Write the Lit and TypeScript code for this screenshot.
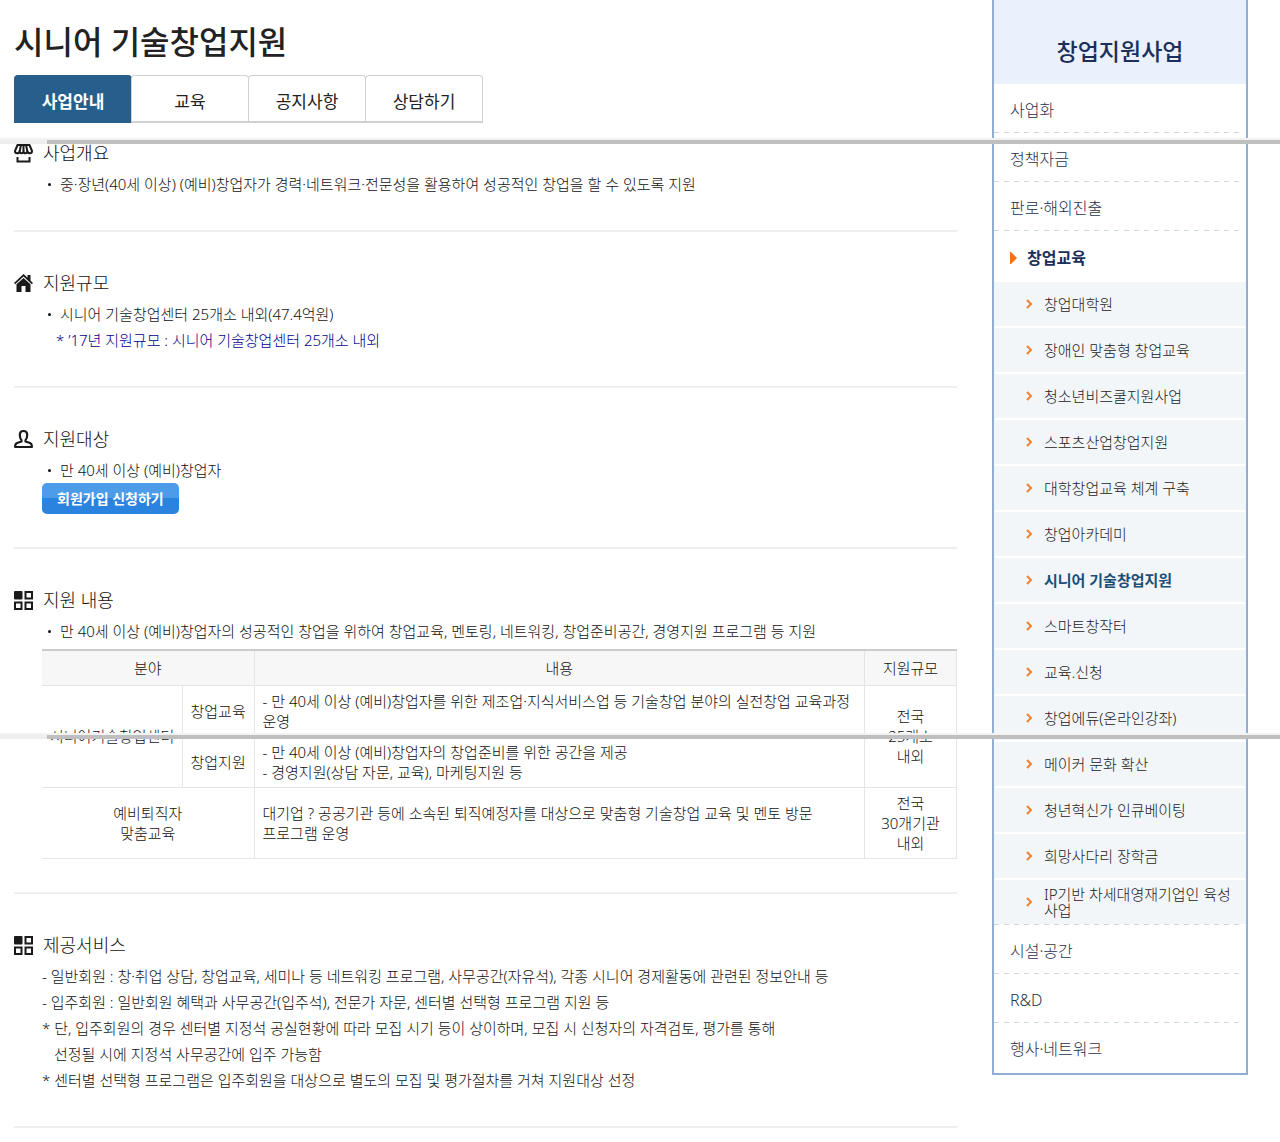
import { LitElement, html, css, svg } from "lit";
import { customElement } from "lit/decorators.js";

const TABS = ["사업안내", "교육", "공지사항", "상담하기"];

const SUB_MENU = [
  "창업대학원",
  "장애인 맞춤형 창업교육",
  "청소년비즈쿨지원사업",
  "스포츠산업창업지원",
  "대학창업교육 체계 구축",
  "창업아카데미",
  "시니어 기술창업지원",
  "스마트창작터",
  "교육.신청",
  "창업에듀(온라인강좌)",
  "메이커 문화 확산",
  "청년혁신가 인큐베이팅",
  "희망사다리 장학금",
  "IP기반 차세대영재기업인 육성사업",
];

const ICONS = {
  shop: svg`
    <g fill="none" stroke="currentColor" stroke-width="2" stroke-linejoin="round">
      <path d="M3.500 2h12L18 8c0 3-4.200 3-4.700 0 0 3-3.800 3-3.800 0 0 3-3.800 3-3.800 0C5.200 11 1 11 1 8z"/>
      <path d="M5.700 8 7 2M9.500 8V2M13.300 8 12 2"/>
      <path d="M3.500 14v4.500h12V14" stroke-linejoin="miter"/>
    </g>`,
  home: svg`
    <path d="M0 10 9.500 1l4 3.700V2h3v5.500L19 10l-1.200 1.300-8.300-7.700-8.300 7.700z"/>
    <path d="M2.500 11.300 9.500 5l7 6.300V19h-5v-6h-4v6h-5z"/>`,
  user: svg`
    <path fill="none" stroke="currentColor" stroke-width="2.200" stroke-linejoin="round" d="M9.500 2C6.800 2 5.800 3.800 5.800 6c0 2.500.8 4.200 1.700 5.200v1.300L3 14c-1.300.5-1.900 1.500-1.900 4h16.800c0-2.500-.6-3.500-1.900-4l-4.500-1.500v-1.300c.9-1 1.700-2.700 1.700-5.200 0-2.200-1-4-3.700-4z"/>`,
  grid: svg`
    <rect x="0" y="1" width="8.500" height="8.500" rx="1"/>
    <g fill="none" stroke="currentColor" stroke-width="2">
      <rect x="11.500" y="2" width="6.500" height="6.500"/>
      <rect x="1" y="12.500" width="6.500" height="6.500"/>
      <rect x="11.500" y="12.500" width="6.500" height="6.500"/>
    </g>`,
};

@customElement("app-root")
export class AppRoot extends LitElement {
  static styles = css`
    :host {
      display: block;
      position: relative;
      overflow: hidden;
      background: #fff;
      color: #111;
      font: 300 15px/20px "Noto Sans", "Noto Sans CJK KR", sans-serif;
    }
    * { box-sizing: border-box; }
    h1, h2, p, ul { margin: 0; padding: 0; }
    ul { list-style: none; }
    a { color: inherit; text-decoration: none; }

    .page { display: flex; align-items: flex-start; gap: 35px; padding: 0 32px 0 14px; }
    .main { flex: 1; min-width: 0; }
    .title { padding-top: 20px; font-size: 32px; line-height: 44px; font-weight: 500; color: #222; }

    .tabs { display: flex; margin-top: 11px; }
    .tab {
      width: 118px; height: 48px; margin-right: -1px; padding: 6px 0 0;
      border: 1px solid #d0d0d0; border-bottom-width: 2px; border-radius: 4px 4px 0 0; background: #fff;
      color: #222; font: inherit; font-size: 17px; font-weight: 400;
    }
    .tab.on { border-color: #265f8c; background: #265f8c; color: #fff; font-weight: 700; }

    .section { border-bottom: 2px solid #eee; padding: 39px 0 33px; }
    .section.first { padding-top: 18px; }
    .head { display: flex; align-items: center; gap: 9px; height: 24px; font-size: 18px; font-weight: 300; line-height: 24px; }
    .icon { width: 20px; height: 20px; fill: #1a1a1a; color: #1a1a1a; }
    .body { padding: 6px 0 0 28px; line-height: 26px; }
    .bullets li { position: relative; padding-left: 18px; }
    .bullets li::before {
      content: ""; position: absolute; left: 6px; top: 12px;
      width: 3px; height: 3px; border-radius: 50%; background: #111;
    }
    .note { padding-left: 14px; color: #00008c; }
    .indent { padding-left: 12px; }
    .join {
      display: block; height: 31px; padding: 0 15px; border: 0; border-radius: 5px;
      background: linear-gradient(#4c9cea 0 48%, #2b83e0 48%); color: #fff;
      font: inherit; font-size: 14px; font-weight: 700;
    }

    .table { width: 100%; margin-top: 5px; border-collapse: collapse; table-layout: fixed; line-height: 20px; }
    .table th { height: 35px; background: #f7f7f7; border-top: 2px solid #ccc; font-weight: 300; }
    .table th, .table td {
      padding: 5px 8px; border-bottom: 1px solid #e5e5e5; border-right: 1px solid #e5e5e5;
      text-align: center; white-space: nowrap;
    }
    .table td.text { text-align: left; white-space: normal; }
    .c1 { width: 140px; }
    .c2 { width: 72px; }
    .c4 { width: 92px; }

    .side { width: 256px; padding-bottom: 2px; border: 2px solid #92add2; border-top: 0; color: #222; }
    .side-title {
      display: flex; align-items: center; justify-content: center; height: 84px; padding-top: 18px;
      background: #eaf1fc; color: #1c2f5a; font-size: 23px; line-height: 32px; font-weight: 500;
    }
    .item { display: flex; align-items: center; height: 48px; padding: 4px 16px 0; font-size: 16px; color: #1f2f4a; }
    .rule { height: 1px; padding-right: 6px; background: repeating-linear-gradient(90deg, #ccd9e0 0 5px, #fff 5px 10px) content-box; }
    .item.open { gap: 9px; height: 51px; padding-top: 2px; color: #1c2f5a; font-weight: 700; }
    .tri { width: 8px; height: 12px; fill: #f47216; }
    .subs { display: grid; gap: 2px; }
    .sub { display: flex; align-items: center; gap: 11px; height: 44px; padding: 0 12px 0 32px; background: #f2f6f9; line-height: 16px; }
    .sub.on { color: #1a5078; font-weight: 700; }
    .chev { flex: none; width: 7px; height: 10px; fill: none; stroke: #f08030; stroke-width: 2; }

    .seam {
      position: absolute; left: 0; right: 0; height: 6px;
      background: linear-gradient(#f2f2f2 2px, transparent 2px), linear-gradient(90deg, #eee 47px, #bfbfbf 47px);
    }
    .seam.a { top: 138px; }
    .seam.b { top: 733px; }
  `;

  head(icon: keyof typeof ICONS, text: string) {
    return html`<h2 class="head"><svg class="icon" viewBox="0 0 20 20" aria-hidden="true">${ICONS[icon]}</svg>${text}</h2>`;
  }

  item(text: string) {
    return html`<li><a class="item" href="#">${text}</a></li>`;
  }

  render() {
    const rule = html`<li class="rule" role="presentation"></li>`;
    return html`
      <div class="page">
        <main class="main">
          <h1 class="title">시니어 기술창업지원</h1>
          <nav class="tabs">
            ${TABS.map((t, i) => html`<button class="tab ${i === 0 ? "on" : ""}">${t}</button>`)}
          </nav>
          <section class="section first">
            ${this.head("shop", "사업개요")}
            <ul class="body bullets">
              <li>중·장년(40세 이상) (예비)창업자가 경력·네트워크·전문성을 활용하여 성공적인 창업을 할 수 있도록 지원</li>
            </ul>
          </section>
          <section class="section">
            ${this.head("home", "지원규모")}
            <div class="body">
              <ul class="bullets"><li>시니어 기술창업센터 25개소 내외(47.4억원)</li></ul>
              <p class="note">* ’17년 지원규모 : 시니어 기술창업센터 25개소 내외</p>
            </div>
          </section>
          <section class="section">
            ${this.head("user", "지원대상")}
            <div class="body">
              <ul class="bullets"><li>만 40세 이상 (예비)창업자</li></ul>
              <button class="join">회원가입 신청하기</button>
            </div>
          </section>
          <section class="section">
            ${this.head("grid", "지원 내용")}
            <div class="body">
              <ul class="bullets">
                <li>만 40세 이상 (예비)창업자의 성공적인 창업을 위하여 창업교육, 멘토링, 네트워킹, 창업준비공간, 경영지원 프로그램 등 지원</li>
              </ul>
              <table class="table">
                <colgroup><col class="c1" /><col class="c2" /><col /><col class="c4" /></colgroup>
                <thead>
                  <tr><th colspan="2">분야</th><th>내용</th><th>지원규모</th></tr>
                </thead>
                <tbody>
                  <tr>
                    <td rowspan="2">시니어기술창업센터</td>
                    <td>창업교육</td>
                    <td class="text">- 만 40세 이상 (예비)창업자를 위한 제조업·지식서비스업 등 기술창업 분야의 실전창업 교육과정 운영</td>
                    <td rowspan="2">전국<br />25개소<br />내외</td>
                  </tr>
                  <tr>
                    <td>창업지원</td>
                    <td class="text">- 만 40세 이상 (예비)창업자의 창업준비를 위한 공간을 제공<br />- 경영지원(상담 자문, 교육), 마케팅지원 등</td>
                  </tr>
                  <tr>
                    <td colspan="2">예비퇴직자<br />맞춤교육</td>
                    <td class="text">대기업 ? 공공기관 등에 소속된 퇴직예정자를 대상으로 맞춤형 기술창업 교육 및 멘토 방문<br />프로그램 운영</td>
                    <td>전국<br />30개기관<br />내외</td>
                  </tr>
                </tbody>
              </table>
            </div>
          </section>
          <section class="section">
            ${this.head("grid", "제공서비스")}
            <div class="body">
              <p>- 일반회원 : 창·취업 상담, 창업교육, 세미나 등 네트워킹 프로그램, 사무공간(자유석), 각종 시니어 경제활동에 관련된 정보안내 등</p>
              <p>- 입주회원 : 일반회원 혜택과 사무공간(입주석), 전문가 자문, 센터별 선택형 프로그램 지원 등</p>
              <p>* 단, 입주회원의 경우 센터별 지정석 공실현황에 따라 모집 시기 등이 상이하며, 모집 시 신청자의 자격검토, 평가를 통해</p>
              <p class="indent">선정될 시에 지정석 사무공간에 입주 가능함</p>
              <p>* 센터별 선택형 프로그램은 입주회원을 대상으로 별도의 모집 및 평가절차를 거쳐 지원대상 선정</p>
            </div>
          </section>
        </main>
        <aside class="side">
          <h2 class="side-title">창업지원사업</h2>
          <ul>
            ${this.item("사업화")}${rule}${this.item("정책자금")}${rule}${this.item("판로·해외진출")}${rule}
            <li>
              <a class="item open" href="#"><svg class="tri" viewBox="0 0 8 12" aria-hidden="true"><path d="M0 0h1l6 6-6 6H0z" /></svg>창업교육</a>
              <ul class="subs">
                ${SUB_MENU.map((t, i) => html`<li><a class="sub ${i === 6 ? "on" : ""}" href="#"><svg class="chev" viewBox="0 0 7 10" aria-hidden="true"><path d="M1 1l4 4-4 4" /></svg><span>${t}</span></a></li>`)}
              </ul>
            </li>
            ${rule}${this.item("시설·공간")}${rule}${this.item("R&D")}${rule}${this.item("행사·네트워크")}
          </ul>
        </aside>
      </div>
      <div class="seam a"></div>
      <div class="seam b"></div>
    `;
  }
}
